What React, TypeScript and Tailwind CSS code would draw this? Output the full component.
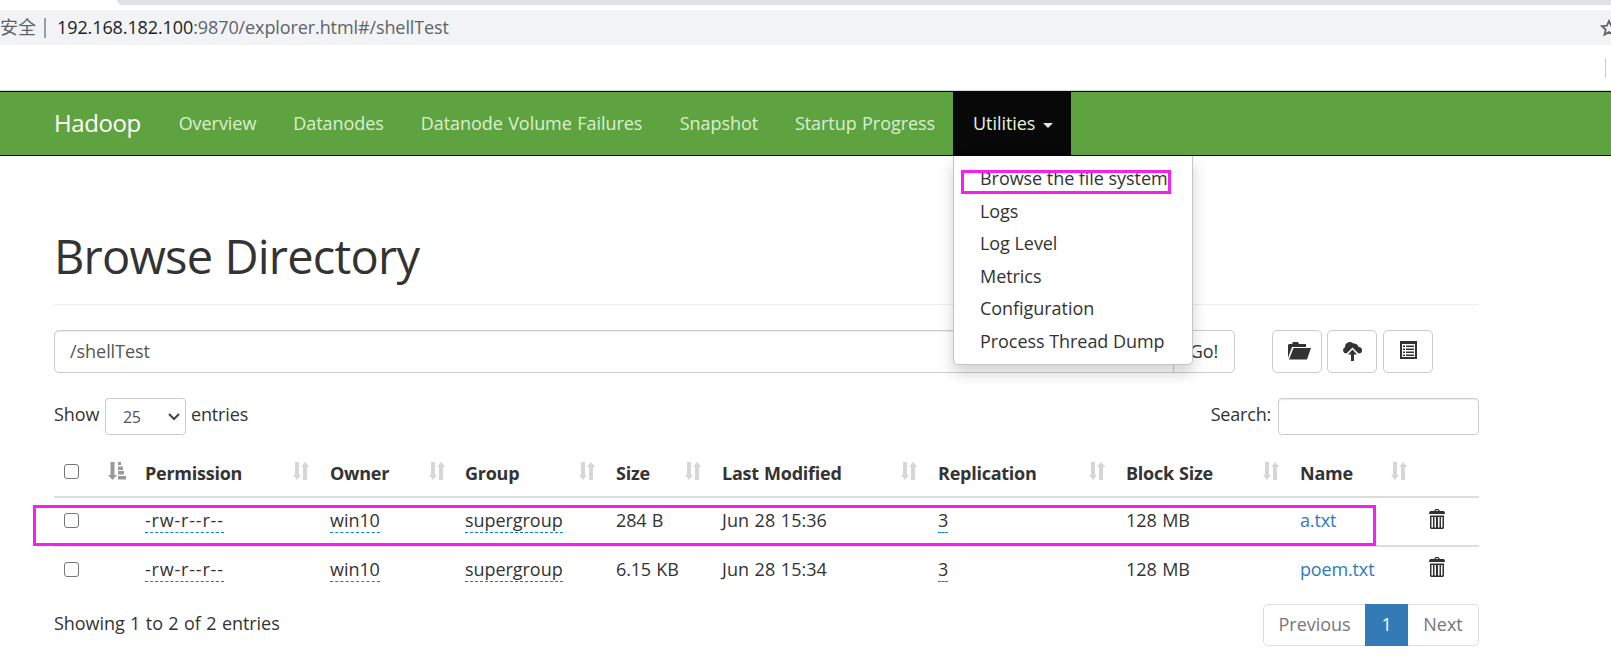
import React from 'react'

const navItems = [
	{ label: 'Overview', box: 'w-[115px]' },
	{ label: 'Datanodes', box: 'w-[127px]' },
	{ label: 'Datanode Volume Failures', box: 'w-[259px]' },
	{ label: 'Snapshot', box: 'w-[116px]' },
	{ label: 'Startup Progress', box: 'w-[176px]' },
]

const menuItems = ['Browse the file system', 'Logs', 'Log Level', 'Metrics', 'Configuration', 'Process Thread Dump']

const columns = [
	{ label: '', width: 'w-[82px]' },
	{ label: 'Permission', width: 'w-[184px]' },
	{ label: 'Owner', width: 'w-[136px]' },
	{ label: 'Group', width: 'w-[150px]' },
	{ label: 'Size', width: 'w-[106px]' },
	{ label: 'Last Modified', width: 'w-[216px]' },
	{ label: 'Replication', width: 'w-[188px]' },
	{ label: 'Block Size', width: 'w-[174px]' },
	{ label: 'Name', width: 'w-[128px]' },
]

const files = [
	{ size: '284 B', modified: 'Jun 28 15:36', blockSize: '128 MB', name: 'a.txt' },
	{ size: '6.15 KB', modified: 'Jun 28 15:34', blockSize: '128 MB', name: 'poem.txt' },
]

function SortIcon() {
	return (
		<svg className="w-[18px] h-[18px]" viewBox="0 0 18 18" fill="#d6d6d6">
			<path d="M3 0h4v13h2L5 18 1 13h2zM11 18V5H9l4-5 4.500 5H15v13z" />
		</svg>
	)
}

function SortedIcon() {
	return (
		<svg className="w-[18px] h-[18px]" viewBox="0 0 18 18" fill="#999">
			<path d="M2.500 0h4v13H9l-4.500 5L0 13h2.500zM10 0h3v3h-3zM10 4.500h5v3.500h-5zM10 9h6v3.500h-6zM10 14h8v3.500h-8z" />
		</svg>
	)
}

function TrashIcon() {
	return (
		<svg className="w-4 h-5" viewBox="0 0 16 20" fill="#333">
			<path fillRule="evenodd" d="M5 2l1.500-2h3L11 2h4l1 2v1H0V4l1-2zM6.500 2h3L9 1.200H7zM1 6.500h14V19l-1 1H2l-1-1zM2.500 8v10.500H4V8zM5.500 8v10.500H7V8zM9 8v10.500h1.500V8zM12 8v10.500h1.500V8z" />
		</svg>
	)
}

function Checkbox() {
	return <span className="block w-[15px] h-[15px] border border-[#767676] rounded-[3px] bg-white" />
}

function Editable({ children }: { children: React.ReactNode }) {
	return <span className="inline-block h-[26px] border-b border-dashed border-[#08c]">{children}</span>
}

export default function App() {
	return (
		<div className="w-[1611px] h-[672px] overflow-hidden bg-white text-[#333] text-[18px] leading-[26px] tracking-[-0.05px] [word-spacing:0.8px] font-['Open_Sans','Noto_Sans_CJK_SC',sans-serif]">
			{/* Browser chrome */}
			<div className="h-[90px]">
				<div className="ml-[117px] h-[5px] bg-[#dee1e6] rounded-bl-lg" />
				<div className="mt-[5px] h-[35px] bg-[#f1f3f4] flex items-center overflow-hidden text-[#5f6368]">
					<div className="w-9 pb-px shrink-0 flex justify-end whitespace-nowrap text-[18px] tracking-normal">不安全</div>
					<div className="w-[2px] h-5 ml-2 bg-[#9a9da1]" />
					<div className="ml-[11px] pb-[2px] whitespace-nowrap tracking-[-0.1px]"><span className="text-[#202124]">192.168.182.100</span>:9870/explorer.html#/shellTest</div>
					<svg className="ml-auto -mr-[7px] w-[18px] h-[18px] shrink-0" viewBox="0 0 18 18" fill="none" stroke="#5f6368" strokeWidth="1.800">
						<path d="M9 2l2.100 4.700 5.100.5-3.900 3.400 1.200 5.100L9 13l-4.500 2.700 1.200-5.100L1.800 7.200l5.100-.5z" />
					</svg>
				</div>
				<div className="ml-[1605px] mt-[13px] w-px h-5 bg-[#ccc]" />
			</div>

			{/* Navbar */}
			<nav className="h-[66px] border-t border-[#d5d7d9]">
				<div className="h-[65px] border-y border-[#080808] bg-[#5fa341] flex items-center text-[#d9f0cf] pl-[54px] whitespace-nowrap">
					<div className="w-[106px] pb-[2px] text-[24px] tracking-[-0.4px] text-white">Hadoop</div>
					{navItems.map((item) => (
						<a key={item.label} className={`${item.box} pb-[2px] text-center`}>{item.label}</a>
					))}
					<div className="w-[118px] h-full bg-[#080808] relative flex items-center pl-5 text-[#e4f5dc]">
						<span className="pb-[2px]">Utilities</span>
						<span className="ml-2 mt-1 border-x-[5px] border-x-transparent border-t-[5px] border-t-[#d9f0cf]" />
						<div className="absolute z-10 left-0 top-[64px] w-[240px] h-[209px] bg-white text-[#333] border border-t-0 border-[#c4c4c4] rounded-b-[5px] shadow-[0_8px_15px_rgba(0,0,0,0.18)] pt-[6px] pl-[26px] [word-spacing:0px]">
							{menuItems.map((item) => (
								<div key={item} className="h-[32.5px] leading-[32px]">{item}</div>
							))}
							<div className="absolute left-[7px] top-[14px] w-[210px] h-6 border-3 border-[#f41ff4]" />
						</div>
					</div>
				</div>
			</nav>

			<main className="ml-[54px] w-[1425px]">
				<h1 className="pt-[68px] h-[148px] text-[47px] leading-[64px] tracking-[-0.8px] whitespace-nowrap">Browse Directory</h1>
				<div className="h-px bg-[#eee]" />

				{/* Path bar */}
				<div className="mt-[25px] h-[43px] flex">
					<div className="w-[1120px] border border-[#ccc] rounded-l-[5px] pl-[15px] pb-[2px] flex items-center text-[#555] shadow-[inset_0_1px_1px_rgba(0,0,0,0.075)]">/shellTest</div>
					<button className="w-[62px] -ml-px border border-[#ccc] rounded-r-[5px] pb-[2px]">Go!</button>
					<div className="ml-[37px] flex">
						<button className="w-[50px] border border-[#ccc] rounded-[5px] flex items-center justify-center">
							<svg className="ml-[5px] mb-px w-[23px] h-[18px]" viewBox="0 0 23 18" fill="#333">
								<path d="M0 3l1-1h3l1-2h5l1 2h7v3H4L0 16zM5.500 6H23l-4 11.500H1z" />
							</svg>
						</button>
						<button className="ml-[5px] w-[50px] border border-[#ccc] rounded-[5px] flex items-center justify-center">
							<svg className="ml-px w-[19px] h-[19px]" viewBox="0 0 19 19" fill="#333">
								<path d="M3 11.500a3.300 3.300 0 0 1-1-6.300A5 5 0 0 1 10.500 1.500 4.300 4.300 0 0 1 15.500 5a3.300 3.300 0 0 1 1 6.500L15 11 9.500 5.500 4 11zM9.500 7.500l4.500 5h-3V19H8v-6.500H5z" />
							</svg>
						</button>
						<button className="ml-[6px] w-[50px] border border-[#ccc] rounded-[5px] flex items-center justify-center">
							<svg className="ml-px mb-[3px] w-[17px] h-[18px]" viewBox="0 0 17 18" fill="#333">
								<path fillRule="evenodd" d="M0 0h17v18H0zM2 3v13h13V3zM3 4.500h2V6H3zM6 4.500h8V6H6zM3 7.500h2V9H3zM6 7.500h8V9H6zM3 10.500h2V12H3zM6 10.500h8V12H6zM3 13.500h2V15H3zM6 13.500h8V15H6z" />
							</svg>
						</button>
					</div>
				</div>

				{/* Table controls */}
				<div className="mt-[25px] h-[37px] flex">
					<span className="w-[51px] pt-[3px]">Show</span>
					<div className="w-[81px] border border-[#ccc] rounded-[4px] pl-[17px] pr-[5px] flex items-center justify-between text-[16px] tracking-[-0.5px] text-[#555]">
						25
						<svg className="w-3 h-2" viewBox="0 0 12 8" fill="none" stroke="#444" strokeWidth="2"><path d="M1 1l5 5 5-5" /></svg>
					</div>
					<span className="pl-[5px] pt-[3px] tracking-[-0.15px]">entries</span>
					<span className="ml-auto pt-[3px] tracking-[-0.2px]">Search:</span>
					<div className="ml-[7px] w-[201px] border border-[#ccc] rounded-[4px] shadow-[inset_0_1px_1px_rgba(0,0,0,0.075)]" />
				</div>

				{/* File table */}
				<div className="relative mt-[10px] whitespace-nowrap">
					<div className="h-[53px] flex border-b-2 border-[#ddd] font-bold tracking-[-0.25px]">
						{columns.map((col, index) => (
							<div key={index} className={`${col.width} shrink-0 flex justify-between pr-[10px] pt-[16px] ${index === 1 || index === 3 ? 'pl-[9px]' : 'pl-[10px]'}`}>
								<span className={index === 0 ? 'pt-[3px]' : '-mt-px'}>{index === 0 ? <Checkbox /> : col.label}</span>
								<span className="pt-px">{index === 0 ? <SortedIcon /> : <SortIcon />}</span>
							</div>
						))}
					</div>
					{files.map((file, index) => (
						<div key={file.name} className={`flex pt-[9px] ${index === 0 ? 'h-[49px] border-b-2 border-[#ddd]' : 'h-[46px]'}`}>
							<div className="w-[82px] pl-[10px] pt-[6px]"><Checkbox /></div>
							<div className="w-[184px] pl-[9px] tracking-[0.8px]"><Editable>-rw-r--r--</Editable></div>
							<div className="w-[136px] pl-[10px]"><Editable>win10</Editable></div>
							<div className="w-[150px] pl-[9px]"><Editable>supergroup</Editable></div>
							<div className="w-[106px] pl-[10px] tracking-[-0.15px]">{file.size}</div>
							<div className="w-[216px] pl-[10px] tracking-[0.05px]">{file.modified}</div>
							<div className="w-[188px] pl-[10px]"><Editable>3</Editable></div>
							<div className="w-[174px] pl-[10px]">{file.blockSize}</div>
							<div className="w-[128px] pl-[10px] tracking-[-0.15px] text-[#337ab7]">{file.name}</div>
							<div className={`pl-[11px] ${index === 0 ? 'pt-[2px]' : 'pt-px'}`}><TrashIcon /></div>
						</div>
					))}
					<div className="absolute -left-[21px] top-[60px] w-[1343px] h-[41px] border-3 border-[#f41ff4]" />
				</div>

				{/* Footer */}
				<div className="mt-[11px] flex justify-between">
					<span className="pt-[6px]">Showing 1 to 2 of 2 entries</span>
					<div className="w-[216px] h-[42px] flex leading-[38px] text-center text-[#777] border border-[#ddd] rounded-[5px]">
						<span className="w-[101px]">Previous</span>
						<span className="w-[43px] -my-px leading-[40px] bg-[#337ab7] text-white">1</span>
						<span className="flex-1">Next</span>
					</div>
				</div>
			</main>
		</div>
	)
}
